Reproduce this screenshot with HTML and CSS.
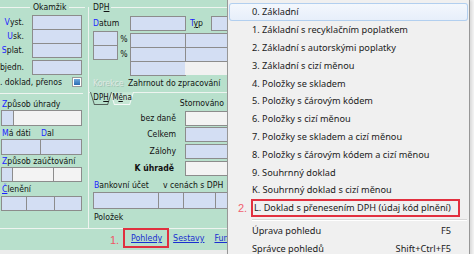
FILE: index.html
```html
<!DOCTYPE html>
<html lang="cs">
<head>
<meta charset="UTF-8">
<meta name="viewport" content="width=device-width,initial-scale=1">
<title>Doklad – pohledy</title>
<link rel="stylesheet" href="styles.css">
</head>
<body>
<div class="screen">
  <div class="panel">
    <div class="cols">
      <div class="col-l">
        <div class="legend mid"><span>Okamžik</span></div>
        <div class="frow first"><label><b class="k">V</b>yst.</label><span class="box w50"></span></div>
        <div class="frow"><label><b class="k">U</b>sk.</label><span class="box w50"></span></div>
        <div class="frow"><label><b class="k">S</b>plat.</label><span class="box w50"></span></div>
        <div class="frow gap"><label>Objedn.</label><span class="box w50"></span></div>
        <div class="frow chk"><label class="long">Daň. doklad, přenos</label><span class="check"></span></div>
        <div class="hline"></div>
        <div class="lbl m4"><b class="k">Z</b>působ úhrady</div>
        <div class="segs h16"><span class="seg" style="width:13px"></span><span class="seg off" style="width:69px"></span></div>
        <div class="lbl m1"><span class="w40"><b class="k">M</b>á dáti</span><b class="k">D</b>al</div>
        <div class="segs h16"><span class="seg" style="width:40px"></span><span class="seg" style="width:42px"></span></div>
        <div class="lbl"><b class="k">Z</b>působ zaúčtování</div>
        <div class="segs"><span class="seg" style="width:12px"></span><span class="seg off" style="width:42px"></span><span class="seg off" style="width:29px"></span></div>
        <div class="lbl m1"><b class="k u">Č</b>lenění</div>
        <div class="segs m1"><span class="seg" style="width:26px"></span><span class="seg" style="width:29px"></span><span class="seg" style="width:28px"></span></div>
      </div>
      <div class="col-r">
        <div class="legend"><span>DP<u>H</u></span></div>
        <div class="rrow datum">
          <label class="w37"><b class="k">D</b>atum</label><span class="box" style="width:56px"></span>
          <label class="typ"><b class="k">T</b><u>y</u>p</label><span class="box" style="width:40px"></span>
        </div>
        <div class="rates">
          <div class="small">
            <span class="box"></span><span class="box"></span>
          </div>
          <div class="pct"><span>%</span><span>%</span></div>
          <div class="grid">
            <span class="box"></span><span class="box"></span>
            <span class="box"></span><span class="box"></span>
            <span class="box"></span><span class="blank"></span>
          </div>
        </div>
        <div class="korekce"><span class="dis">Korekce</span>Zahrnout do zpracování</div>
        <div class="tabs">
          <span class="tab on"><span class="tt">DP<u>H</u></span></span>
          <span class="tab"><span class="tt">M<u>ě</u>na</span></span>
          <span class="storno">Stornováno</span>
        </div>
        <div class="vrow m2"><label>bez daně</label><span class="box off"></span></div>
        <div class="vrow m1"><label>Celkem</label><span class="box"></span></div>
        <div class="vrow m2"><label>Zálohy</label><span class="box"></span></div>
        <div class="vrow m2"><label class="strong">K úhradě</label><span class="box off"></span></div>
        <div class="bank"><span class="w69"><b class="k">B</b>ankovní účet</span>v cenách s DPH</div>
        <div class="segs bankbox"><span class="seg" style="width:66px"></span><span class="seg" style="width:26px"></span><span class="seg" style="width:33px"></span><span class="seg" style="width:30px"></span></div>
        <div class="polozek">Položek</div>
      </div>
    </div>
    <div class="linkbar">
      <span class="mark">1.</span>
      <a href="#" class="boxed">Pohledy</a>
      <a href="#" class="next">Sestavy</a>
      <a href="#" class="far">Funkce</a>
    </div>
    <div class="status"></div>
  </div>

  <div class="menu">
    <div class="mi hot">0. Základní</div>
    <div class="mi">1. Základní s recyklačním poplatkem</div>
    <div class="mi">2. Základní s autorskými poplatky</div>
    <div class="mi">3. Základní s cizí měnou</div>
    <div class="mi">4. Položky se skladem</div>
    <div class="mi">5. Položky s čárovým kódem</div>
    <div class="mi">6. Položky s cizí měnou</div>
    <div class="mi">7. Položky se skladem a cizí měnou</div>
    <div class="mi">8. Položky s čárovým kódem a cizí měnou</div>
    <div class="mi">9. Souhrnný doklad</div>
    <div class="mi">K. Souhrnný doklad s cizí měnou</div>
    <div class="mi marked"><span class="mark">2.</span><span class="redbox">L. Doklad s přenesením DPH (údaj kód plnění)</span></div>
    <div class="sep"></div>
    <div class="mi"><span>Úprava pohledu</span><span class="key">F5</span></div>
    <div class="mi"><span>Správce pohledů</span><span class="key">Shift+Ctrl+F5</span></div>
  </div>
</div>
</body>
</html>
```

FILE: styles.css
```css
*{box-sizing:border-box;}
body{margin:0;background:#f6f6f6;font-family:"DejaVu Sans Condensed","DejaVu Sans",sans-serif;font-size:8.6px;color:#111;}
.screen{position:relative;width:474px;height:254px;overflow:hidden;background:#f6f6f6;}

/* form panel */
.panel{width:227px;height:254px;background:#b8e0cc;display:flex;flex-direction:column;overflow:hidden;}
.cols{display:flex;height:229px;flex:none;border-bottom:1px solid #eef4f0;}
.col-l{width:89px;flex:none;margin-top:7px;border-right:1px solid #eef4f0;}
.col-r{flex:1;min-width:0;margin-top:7px;}
.legend{display:flex;align-items:center;height:14px;margin-top:-7px;white-space:nowrap;}
.legend::after{content:"";flex:1;border-top:1px solid #eef4f0;}
.legend span{padding:0 2px 0 4px;}
.legend.mid{padding-right:3px;}
.legend.mid::before{content:"";width:30px;border-top:1px solid #eef4f0;}
.legend.mid span{padding:0 3px;}
.k{color:#1d1dff;font-weight:normal;}
.k.u{text-decoration:underline;}

.box{display:block;height:15px;border:1px solid #8c8c8c;background:#d3def3;flex:none;}
.box.off{background:#f3f3f3;}
.w50{width:50px;}

.frow{display:flex;align-items:flex-start;height:14px;}
.frow.first{margin-top:1px;}
.frow.gap{margin-top:3px;}
.frow label{width:24px;margin-right:8px;display:flex;justify-content:flex-end;white-space:nowrap;line-height:15px;flex:none;}
.frow.chk{margin-top:1px;}
.frow label.long{width:62px;margin-right:10px;line-height:14px;}
.check{width:10px;height:10px;margin-top:2px;border:1px solid #9a9a9a;background:#fff;padding:1px;flex:none;}
.check::after{content:"";display:block;width:100%;height:100%;background:linear-gradient(#6fa8dc,#2b6cb3);}

.hline{width:83px;margin-top:4px;border-top:1px solid #eef4f0;}
.lbl{height:12px;line-height:12px;padding-left:2px;white-space:nowrap;display:flex;}
.m1{margin-top:1px;}
.m2{margin-top:2px;}
.m4{margin-top:4px;}
.w40{width:39px;flex:none;}
.segs{display:flex;height:15px;margin-left:1px;}
.segs.h16{height:16px;}
.seg{border:1px solid #8c8c8c;background:#d3def3;margin-left:-1px;flex:none;}
.seg:first-child{margin-left:0;}
.seg.off{background:#f3f3f3;}

/* right column */
.rrow{display:flex;align-items:flex-start;padding-left:4px;white-space:nowrap;}
.rrow label{line-height:15px;flex:none;}
.datum{margin-top:2px;}
.w37{width:37px;}
.typ{margin-left:4px;width:21px;}
.rates{display:flex;padding-left:4px;height:45px;}
.small{display:flex;flex-direction:column;width:25px;flex:none;}
.small .box{height:15px;}
.small .box + .box{margin-top:-1px;}
.pct{width:12px;flex:none;display:flex;flex-direction:column;align-items:center;padding-top:1px;}
.pct span{height:15px;line-height:15px;}
.grid{display:grid;grid-template-columns:56px 60px;grid-auto-rows:14px;margin-top:2px;flex:none;}
.grid .box{margin:0 0 -1px -1px;}
.grid .box:nth-child(odd){margin-left:0;}
.blank{background:#f1f1f1;border-top:1px solid #8c8c8c;margin-left:-1px;}
.korekce{height:14px;line-height:14px;padding-left:4px;white-space:nowrap;}
.dis{display:inline-block;width:35px;color:#dfe8e3;text-shadow:1px 1px 0 #a3c3b2;}

.tabs{display:flex;align-items:flex-start;height:17px;border-top:1px solid #eef4f0;padding-left:1px;margin-top:2px;}
.tab{position:relative;flex:none;height:13px;width:22px;margin-top:-1px;text-align:center;line-height:12px;font-size:8px;}
.tab::before{content:"";position:absolute;inset:0;background:#56625b;clip-path:polygon(0 0,100% 0,calc(100% - 4px) 100%,4px 100%);}
.tab::after{content:"";position:absolute;inset:0 1px 1px 1px;background:#b8e0cc;clip-path:polygon(0 0,100% 0,calc(100% - 3.7px) 100%,3.7px 100%);}
.tab + .tab{width:24px;margin-left:-2px;}
.tab + .tab::before{background:#f4f8f6;}
.tab + .tab::after{background:#c6e7d5;}
.tab.on{z-index:1;}
.tt{position:relative;z-index:1;}
.storno{margin-left:auto;padding-right:3px;margin-top:4px;line-height:12px;white-space:nowrap;}

.vrow{display:flex;align-items:flex-start;height:15px;}
.vrow label{width:88px;flex:none;padding-right:1px;text-align:right;line-height:15px;white-space:nowrap;}
.vrow .box{width:50px;margin-left:8px;}
.vrow label.strong{font-weight:bold;padding-right:3px;}
.bank{display:flex;margin-top:3px;height:12px;line-height:12px;padding-left:5px;white-space:nowrap;}
.w69{width:69px;flex:none;}
.bankbox{height:17px;margin-top:1px;margin-left:4px;}
.polozek{margin-top:2px;height:12px;line-height:12px;padding-left:5px;}

.linkbar{display:flex;align-items:flex-start;height:21px;padding-left:110px;flex:none;font-size:8.8px;}
.linkbar a{color:#1a2fd0;text-decoration:underline;line-height:16px;white-space:nowrap;flex:none;}
.linkbar .mark{font-family:"Liberation Sans",Arial,sans-serif;font-size:11px;color:#ee5565;line-height:22px;width:13px;flex:none;}
.linkbar .boxed{border:2px solid #e0303f;height:20px;margin-top:-1px;padding:0 5px 0 6px;}
.linkbar .next{margin-left:4px;margin-top:1px;}
.linkbar .far{margin-left:10px;margin-top:1px;}
.status{flex:1;background:#ececec;}

/* popup menu */
.menu{position:absolute;left:227px;top:-2px;width:243px;height:262px;background:#f0f0f0;border:1px solid #979797;padding-top:4px;
  font-family:"Noto Sans","Open Sans",sans-serif;font-size:9.2px;color:#1b1b1b;box-shadow:2px 2px 3px rgba(0,0,0,0.12);}
.mi{display:flex;align-items:center;justify-content:space-between;height:17.8px;margin:0 1px;padding:0 17px 0 23px;white-space:nowrap;}
.mi.hot{border-radius:3px;box-shadow:inset 0 0 0 1px #b2cfef;background:linear-gradient(#f4f8fd,#e6eefa);}
.mi.marked{justify-content:flex-start;padding-left:9px;}
.mi .mark{width:13px;flex:none;font-family:"Liberation Sans",Arial,sans-serif;font-size:11px;color:#f0606f;}
.redbox{display:flex;align-items:center;height:18px;border:2px solid #e2303f;padding:0 7px 0 1px;}
.sep{margin:2px 2px 1px 24px;border-top:1px solid #d8d8d8;border-bottom:1px solid #fff;}
.key{text-align:right;}
```
